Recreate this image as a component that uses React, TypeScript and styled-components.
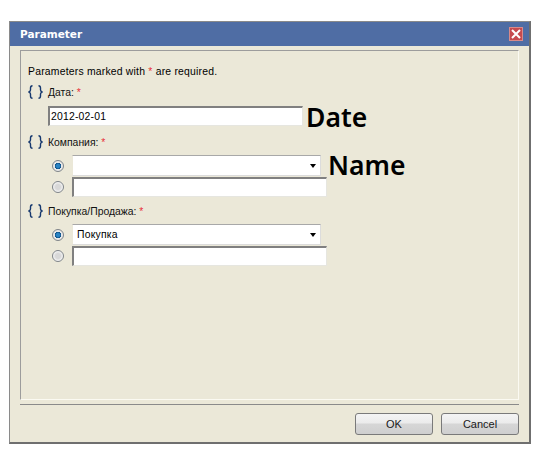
import React from "react";
import styled, { createGlobalStyle } from "styled-components";

const Global = createGlobalStyle`
  html, body { margin: 0; padding: 0; background: #fff; }
  body { width: 542px; height: 456px; overflow: hidden; font-family: "Liberation Sans", Arial, sans-serif; }
`;

const Dialog = styled.div`
  position: relative;
  box-sizing: border-box;
  width: 522px;
  height: 423px;
  margin: 21px 0 0 9px;
  background: #ebe8d8;
  border: 1px solid #8a8a8a;
  border-right: 2px solid #6f6f6f;
  border-bottom: 2px solid #6f6f6f;
  display: flex;
  flex-direction: column;
`;

const TitleBar = styled.div`
  height: 24px;
  background: #4f6da4;
  display: flex;
  align-items: center;
  justify-content: space-between;
  padding: 0 6px 0 10px;
  flex: none;
`;

const Title = styled.span`
  color: #fff;
  font: bold 10.5px "DejaVu Sans", sans-serif;
`;

const Close = styled.div`
  width: 14px;
  height: 14px;
  background: #c64a4e;
  border: 1px solid #d98a8a;
  box-sizing: border-box;
  display: flex;
  align-items: center;
  justify-content: center;
`;

const Panel = styled.div`
  box-sizing: border-box;
  margin: 4px 10px 0 10px;
  height: 350px;
  flex: none;
  border: 1px solid #9c9c9c;
  border-right-color: #fbfaf2;
  border-bottom-color: #fbfaf2;
  padding: 15px 7px 0;
  font-size: 10.4px;
  color: #000;
`;

const Hint = styled.div`
  height: 12px;
  line-height: 12px;
  letter-spacing: 0.02em;
  margin-bottom: 6px;
`;

const Req = styled.span`
  color: #e8303a;
`;

const ParamLabel = styled.div`
  display: flex;
  align-items: center;
  gap: 5px;
  height: 16px;
  line-height: 16px;
`;

const LabelText = styled.span`
  color: #111;
  padding-top: 1px;
`;

const DateRow = styled.div`
  padding: 6px 0 8px 20px;
`;

const TextInput = styled.div<{ $w: number }>`
  box-sizing: border-box;
  width: ${(p) => p.$w}px;
  height: 20px;
  background: #fff;
  border: 1px solid #e6e6e0;
  border-top: 2px solid #808080;
  border-left: 2px solid #808080;
  padding-left: 1px;
  line-height: 18px;
  letter-spacing: 0.02em;
`;

const Choices = styled.div`
  padding: 5px 0 6px 24px;
  display: flex;
  flex-direction: column;
  gap: 1px;
`;

const ChoiceRow = styled.div`
  display: flex;
  align-items: center;
  gap: 8px;
`;

const Radio = styled.span<{ $on?: boolean }>`
  box-sizing: border-box;
  width: 12px;
  height: 12px;
  border-radius: 50%;
  border: 1px solid #7f8489;
  background: ${(p) =>
    p.$on
      ? "radial-gradient(circle, #2a84c4 0 1.6px, #0e4f86 3px, #e8e8e8 3.4px)"
      : "radial-gradient(circle, #d8d8d8 0 2.5px, #f6f6f6 5px)"};
  flex: none;
`;

const Select = styled.div`
  box-sizing: border-box;
  width: 249px;
  height: 21px;
  background: #fff;
  border: 1px solid #dcdcdc;
  border-top-color: #a8a8a8;
  border-left-color: #ebe8d8;
  padding: 0 4px 0 4px;
  display: flex;
  align-items: center;
  justify-content: space-between;
  letter-spacing: 0.02em;
`;

const Arrow = styled.span`
  width: 0;
  height: 0;
  border-left: 3.5px solid transparent;
  border-right: 3.5px solid transparent;
  border-top: 4px solid #000;
`;

const Separator = styled.div`
  margin: 4px 10px 0 10px;
  height: 1px;
  background: #8a8a8a;
  flex: none;
`;

const Footer = styled.div`
  display: flex;
  justify-content: flex-end;
  gap: 8px;
  padding: 8px 10px 0 0;
`;

const Button = styled.div`
  box-sizing: border-box;
  width: 78px;
  height: 22px;
  border: 1px solid #7a7a7a;
  border-radius: 3px;
  background: linear-gradient(#f4f4f4 0%, #ebebeb 45%, #d6d6d6 50%, #cfcfcf 100%);
  font-size: 11px;
  line-height: 20px;
  text-align: center;
  color: #1a1a1a;
`;

const Note = styled.div<{ $x: number; $y: number }>`
  position: absolute;
  left: ${(p) => p.$x}px;
  top: ${(p) => p.$y}px;
  font-family: "Noto Sans", "Open Sans", sans-serif;
  font-size: 26.5px;
  line-height: 36px;
  font-weight: 600;
  color: #000;
`;

const Braces = () => (
  <svg width="15" height="14" viewBox="0 0 15 14" fill="none" stroke="#16386e" strokeWidth="1.4">
    <path d="M4.5 0.7C2.7 0.7 2.5 1.5 2.5 3V5C2.5 6 1.9 6.7 0.5 7C1.9 7.3 2.5 8 2.5 9V11C2.5 12.5 2.7 13.3 4.5 13.3" />
    <path d="M10.5 0.7C12.3 0.7 12.5 1.5 12.5 3V5C12.5 6 13.1 6.7 14.5 7C13.1 7.3 12.5 8 12.5 9V11C12.5 12.5 12.3 13.3 10.5 13.3" />
  </svg>
);

export default function App() {
  return (
    <>
      <Global />
      <Dialog>
        <TitleBar>
          <Title>Parameter</Title>
          <Close>
            <svg width="10" height="10" viewBox="0 0 10 10" stroke="#fff" strokeWidth="2">
              <path d="M1 1L9 9M9 1L1 9" />
            </svg>
          </Close>
        </TitleBar>
        <Panel>
          <Hint>
            Parameters marked with <Req>*</Req> are required.
          </Hint>
          <ParamLabel>
            <Braces />
            <LabelText>
              Дата: <Req>*</Req>
            </LabelText>
          </ParamLabel>
          <DateRow>
            <TextInput $w={255}>2012-02-01</TextInput>
          </DateRow>
          <ParamLabel>
            <Braces />
            <LabelText>
              Компания: <Req>*</Req>
            </LabelText>
          </ParamLabel>
          <Choices>
            <ChoiceRow>
              <Radio $on />
              <Select>
                <span />
                <Arrow />
              </Select>
            </ChoiceRow>
            <ChoiceRow>
              <Radio />
              <TextInput $w={255} />
            </ChoiceRow>
          </Choices>
          <ParamLabel>
            <Braces />
            <LabelText>
              Покупка/Продажа: <Req>*</Req>
            </LabelText>
          </ParamLabel>
          <Choices>
            <ChoiceRow>
              <Radio $on />
              <Select>
                <span>Покупка</span>
                <Arrow />
              </Select>
            </ChoiceRow>
            <ChoiceRow>
              <Radio />
              <TextInput $w={255} />
            </ChoiceRow>
          </Choices>
        </Panel>
        <Separator />
        <Footer>
          <Button>OK</Button>
          <Button>Cancel</Button>
        </Footer>
        <Note $x={296} $y={77}>Date</Note>
        <Note $x={318} $y={125}>Name</Note>
      </Dialog>
    </>
  );
}
